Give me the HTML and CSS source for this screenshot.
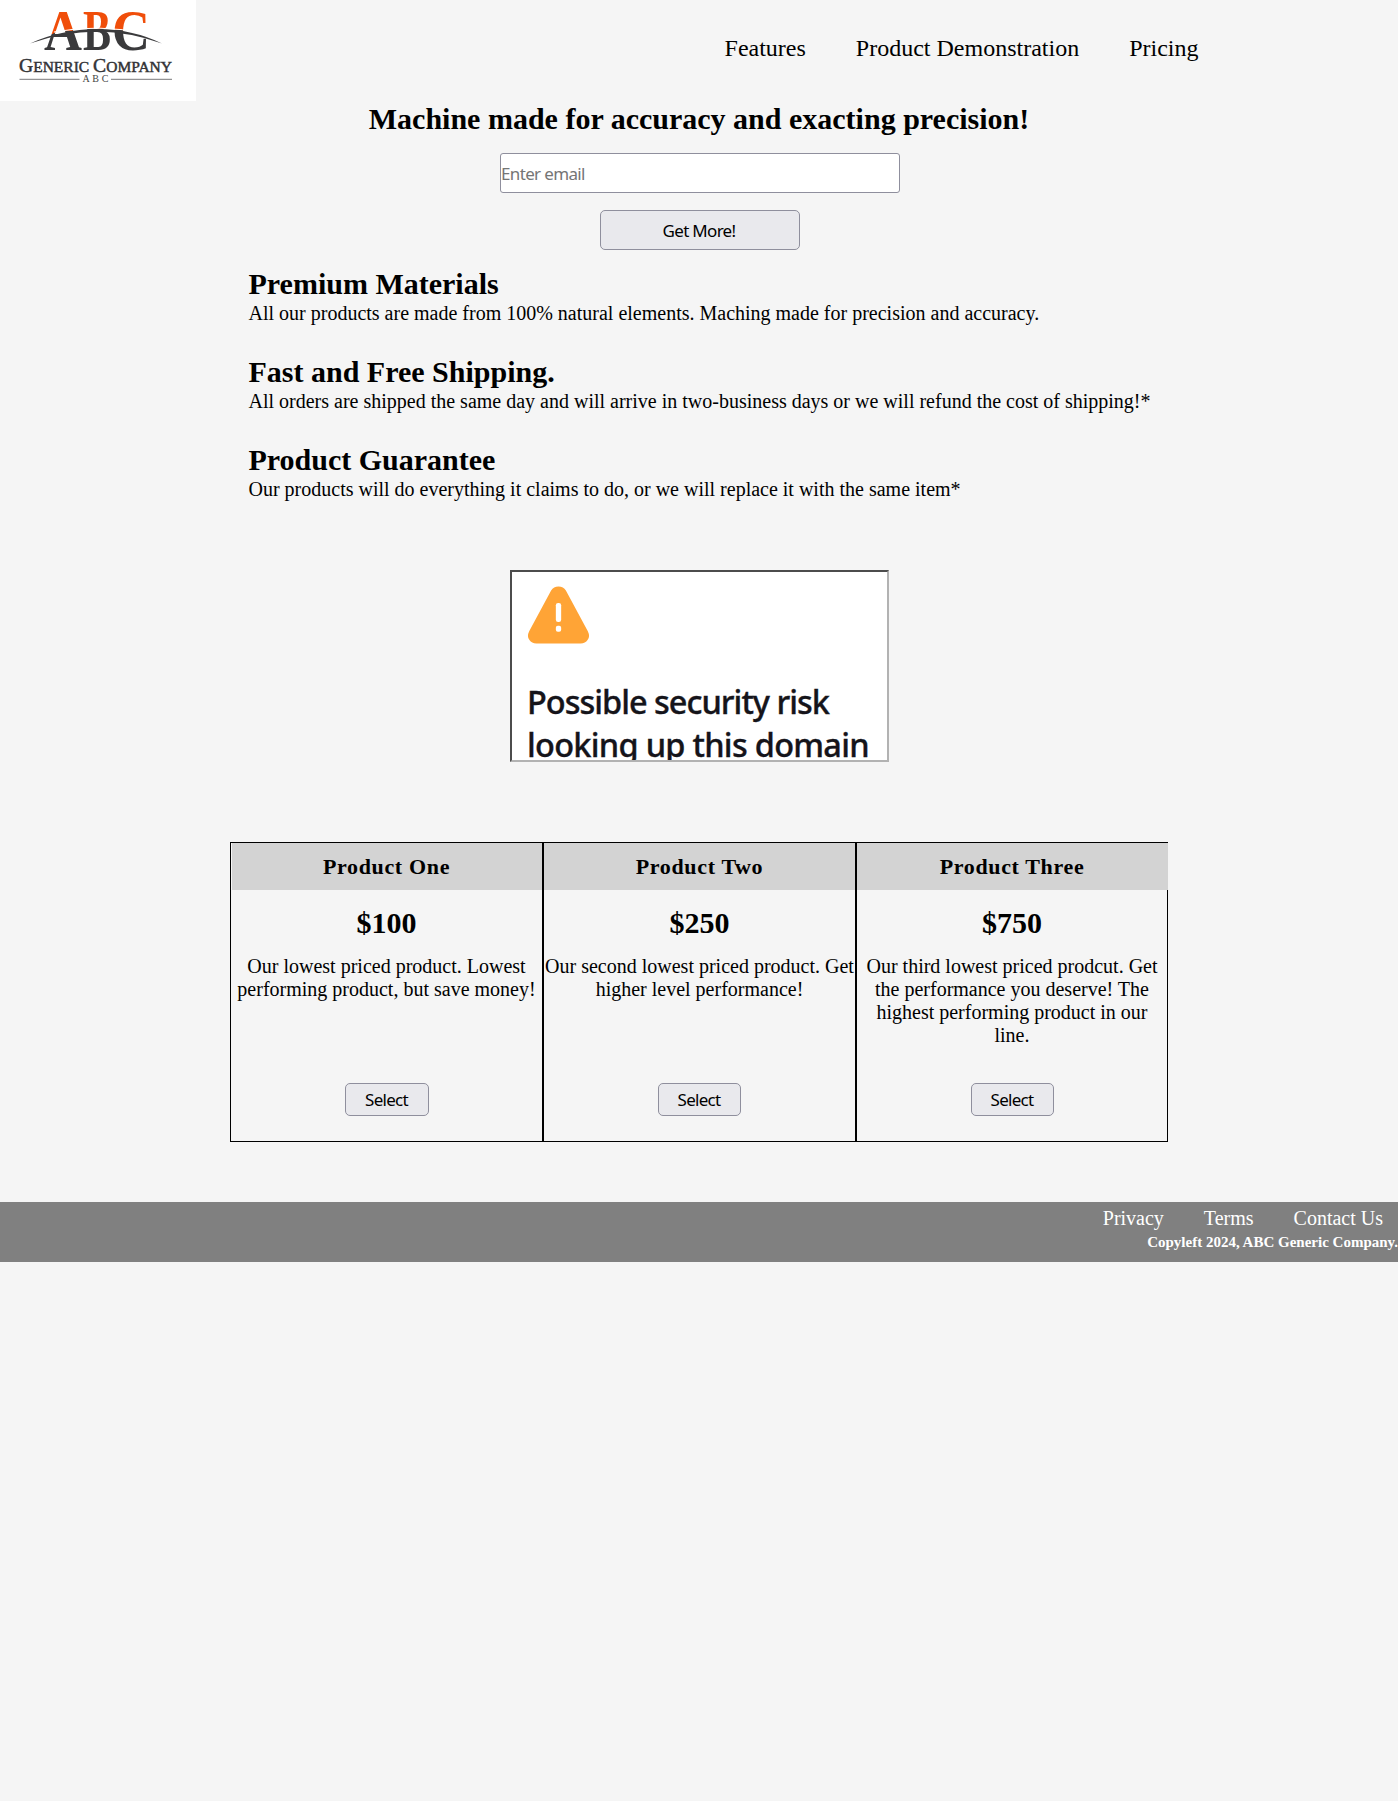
FILE: index.html
```html
<!DOCTYPE html>
<html lang="en">
<head>
<meta charset="utf-8">
<title>ABC Generic Company</title>
<link rel="stylesheet" href="styles.css">
</head>
<body>
<header class="header">
  <svg class="logo" viewBox="0 0 196 101" role="img" aria-label="ABC Generic Company">
    <defs>
      <radialGradient id="split" gradientUnits="userSpaceOnUse" cx="98" cy="259" r="230">
        <stop offset=".999" stop-color="#3a3a3c"/>
        <stop offset="1" stop-color="#f04e0a"/>
      </radialGradient>
    </defs>
    <g class="logo-mark" fill="url(#split)">
      <text x="44" y="50" textLength="38" lengthAdjust="spacingAndGlyphs">A</text>
      <text x="83" y="50" textLength="28" lengthAdjust="spacingAndGlyphs">B</text>
      <text x="112" y="50" textLength="38" lengthAdjust="spacingAndGlyphs">C</text>
    </g>
    <path class="swoosh-gap" d="M54 32Q98 23.500 146 33.500"/>
    <path class="swoosh" d="M30 43.500Q60 29.500 98 29Q132 29 162 43.500Q130 32 98 31.500Q62 32 30 43.500Z"/>
    <text class="logo-name" x="19" y="72.300" textLength="153" lengthAdjust="spacingAndGlyphs"><tspan class="logo-cap">G</tspan>ENERIC <tspan class="logo-cap">C</tspan>OMPANY</text>
    <path class="logo-rule" d="M19.500 79.300H79.500M111 79.300H172"/>
    <text class="logo-sub" x="82.500" y="81.700" textLength="26">A B C</text>
  </svg>
  <nav class="nav">
    <a>Features</a><a>Product Demonstration</a><a>Pricing</a>
  </nav>
</header>
<main>
  <section class="hero">
    <h1>Machine made for accuracy and exacting precision!</h1>
    <input class="email" type="email" placeholder="Enter email">
    <button class="button get-more">Get More!</button>
  </section>
  <section class="features">
    <article><h2>Premium Materials</h2><p>All our products are made from 100% natural elements. Maching made for precision and accuracy.</p></article>
    <article><h2>Fast and Free Shipping.</h2><p>All orders are shipped the same day and will arrive in two-business days or we will refund the cost of shipping!*</p></article>
    <article><h2>Product Guarantee</h2><p>Our products will do everything it claims to do, or we will replace it with the same item*</p></article>
  </section>
  <section class="demo">
    <svg class="warning" viewBox="0 0 64 60" aria-hidden="true">
      <path class="warning-shape" d="M24.500 5.200Q27 1 32 1Q37 1 39.500 5.200L61.800 46.500Q64.400 52 61.500 55.500Q59.300 59 54.500 59H9.500Q4.700 59 2.500 55.500Q-.4 52 2.200 46.500Z"/>
      <rect class="warning-mark" x="29.300" y="17.700" width="5.400" height="19.500" rx="2.300"/>
      <rect class="warning-mark" x="29.300" y="41" width="5.400" height="6" rx="2"/>
    </svg>
    <div class="demo-title"><span class="line-one">Possible security risk</span><br><span class="line-two">looking up this domain</span></div>
  </section>
  <section class="pricing">
    <article class="plan plan-first"><h3>Product One</h3><h4>$100</h4><p>Our lowest priced product. Lowest performing product, but save money!</p><button class="button select">Select</button></article>
    <article class="plan"><h3>Product Two</h3><h4>$250</h4><p>Our second lowest priced product. Get higher level performance!</p><button class="button select">Select</button></article>
    <article class="plan plan-last"><h3>Product Three</h3><h4>$750</h4><p>Our third lowest priced prodcut. Get the performance you deserve! The highest performing product in our line.</p><button class="button select">Select</button></article>
  </section>
</main>
<footer class="footer">
  <nav class="footer-nav"><a>Privacy</a><a>Terms</a><a>Contact Us</a></nav>
  <p class="copyleft">Copyleft 2024, ABC Generic Company.</p>
</footer>
</body>
</html>
```
FILE: styles.css
```css
* { box-sizing: border-box; margin: 0; padding: 0; }
body {
  background: #f5f5f5;
  color: #000;
  font-family: "Liberation Serif", "Times New Roman", serif;
  font-size: 20px;
  line-height: 23px;
  overflow-x: hidden;
}

.header { display: flex; justify-content: space-between; height: 101px; }
.logo { width: 196px; height: 101px; background: #fff; }
.logo-mark { font-size: 56.5px; font-weight: bold; }
.swoosh { fill: #3a3a3c; }
.swoosh-gap { fill: none; stroke: #fff; stroke-width: 1; }
.logo-name { fill: #333336; stroke: #333336; stroke-width: .45; font-size: 15px; }
.logo-cap { font-size: 19px; }
.logo-rule { stroke: #77777a; stroke-width: 1; }
.logo-sub { fill: #444; font-size: 10px; }
.nav { display: flex; gap: 50px; padding: 34px 199.5px 0 0; font-size: 24px; line-height: 28px; }

.hero { display: flex; flex-direction: column; align-items: center; }
h1, h2, h4 { font-size: 30px; line-height: 33px; }
h1 { padding: 1px 0 2px; }
h2, h4 { padding-bottom: 2px; }
.email {
  width: 400px; height: 40px; margin: 16px 0 0 2px; padding: 1px 0;
  border: 1px solid #8f8f9d; border-radius: 3px; background: #fff;
  font: 17px "Noto Sans", sans-serif; letter-spacing: -.65px;
}
.email::placeholder { color: #757575; }
.button {
  border: 1px solid #8f8f9d; border-radius: 5px; background: #e9e9ed; color: #000;
  font: 17px "Noto Sans", sans-serif; letter-spacing: -.7px;
}
.get-more { width: 200px; height: 40px; margin: 17px 0 0 2px; padding-right: 2px; }

.features { display: flex; flex-direction: column; gap: 30px; width: 938px; margin: 17px auto 0; padding-left: 18.5px; }
.features p { white-space: nowrap; }

.demo {
  width: 379px; height: 192px; margin: 69px 509px 0 510px; padding: 13px 0 0 15px; overflow: hidden;
  border: 2px solid; border-color: #4c4c4c #b2b2b2 #b2b2b2 #4c4c4c; background: #fff;
}
.warning { display: block; width: 63px; height: 60px; }
.warning-shape { fill: #ffa436; }
.warning-mark { fill: #fff; }
.demo-title {
  margin-top: 35px; color: #15141a; white-space: nowrap;
  font: 500 32.5px/43px "Noto Sans", sans-serif;
  -webkit-text-stroke: .35px #15141a;
}
.line-one { letter-spacing: -1px; }
.line-two { letter-spacing: -.72px; }

.pricing { display: grid; grid-template-columns: 313px 313px 312px; width: 938px; height: 300px; margin: 80px auto 0; }
.plan { display: flex; flex-direction: column; align-items: center; border: 1px solid #000; text-align: center; }
.plan h3 { align-self: stretch; height: 47px; padding-top: 11px; background: #d3d3d3; font-size: 22px; line-height: 25px; letter-spacing: .65px; }
.plan-first h3 { margin-left: 1px; padding-right: 1px; }
.plan-last h3 { margin-right: -1px; padding-right: 1px; }
.plan h4 { margin-top: 16px; }
.plan p { height: 92px; margin-top: 14px; }
.select { width: 83px; height: 33px; margin-top: 36px; padding-right: 1px; }
.plan-first .select { width: 84px; margin-left: 1px; }
.plan-last .select { margin-left: 1px; }

.footer { height: 60px; margin-top: 60px; padding-top: 5px; background: #808080; color: #fff; }
.footer-nav { display: flex; justify-content: flex-end; gap: 40px; padding-right: 15px; }
.copyleft { font-size: 15px; font-weight: bold; line-height: 17px; padding-top: 4px; text-align: right; }
```
